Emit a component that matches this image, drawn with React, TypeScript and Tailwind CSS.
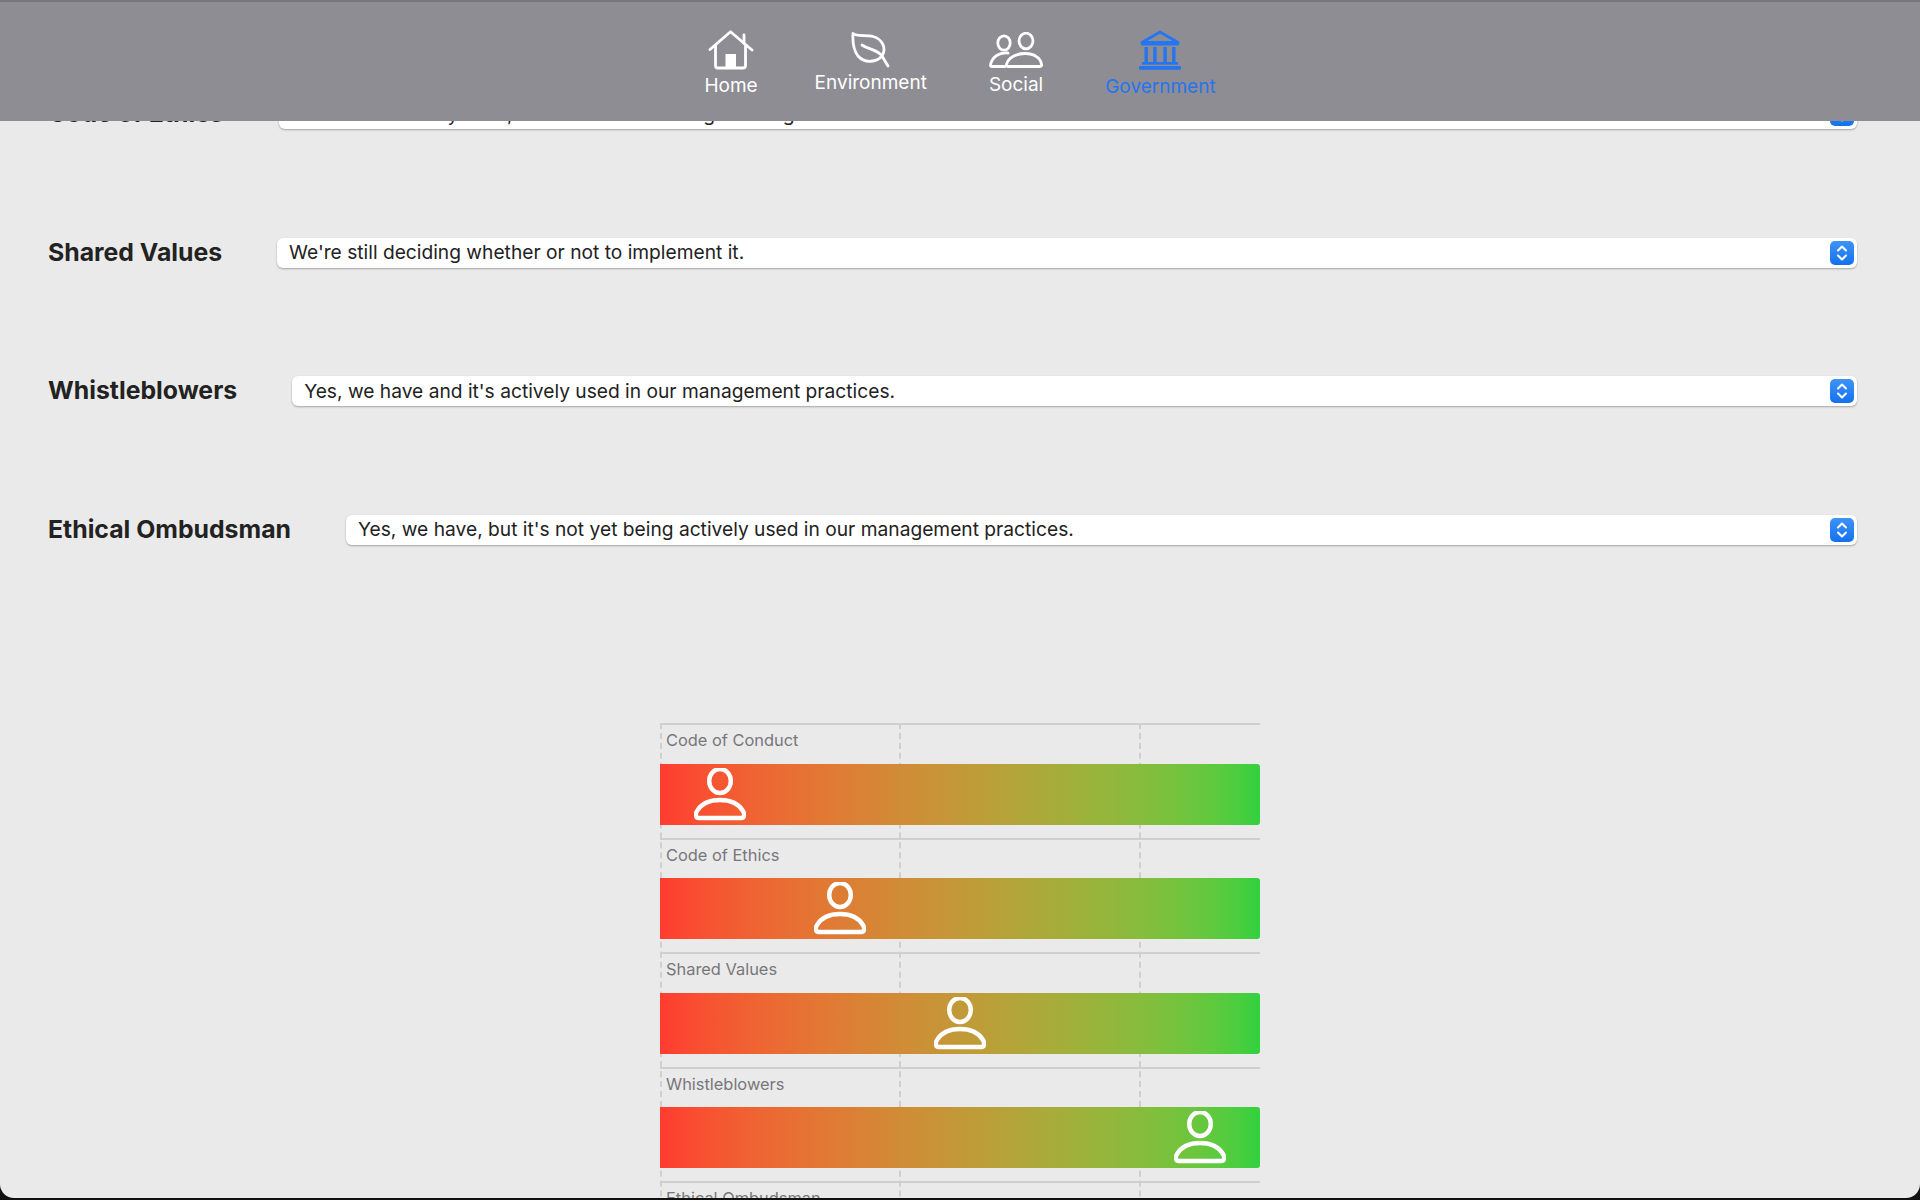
const sans = "font-['Inter','Noto_Sans',sans-serif]";

function HomeIcon() {
  return (
    <svg width="46" height="40" viewBox="0 0 46 40" fill="none" stroke="white" strokeWidth="2.8" strokeLinecap="round" strokeLinejoin="round">
      <path d="M2 19.5 22.5 1.800 44 20" />
      <path d="M36 13.500V5" />
      <path d="M7.500 16V35.500a2.500 2.500 0 0 0 2.500 2.500H35a2.500 2.500 0 0 0 2.500-2.500V16" />
      <rect x="17.5" y="24" width="10.5" height="14" fill="white" stroke="none" />
    </svg>
  );
}
function LeafIcon() {
  return (
    <svg width="40" height="36" viewBox="0 0 40 36" fill="none" stroke="white" strokeWidth="2.8" strokeLinecap="round" strokeLinejoin="round">
      <path d="M2 1.5C6 5 15 2.5 22 4.5C31 7 36 16 31 24C26 30 14 32 7 24C2.5 18 1.5 9 2 1.5Z" />
      <path d="M11 13C18 18 26 17 31 24L37 34" />
    </svg>
  );
}
function PeopleIcon() {
  return (
    <svg width="54" height="36" viewBox="0 0 54 36" fill="none" stroke="white" strokeWidth="2.8" strokeLinecap="round" strokeLinejoin="round">
      <ellipse cx="15" cy="11" rx="6.2" ry="7.2" />
      <ellipse cx="37" cy="9" rx="7" ry="7.8" />
      <path d="M19 21C10 20 3 25 1.5 33a1.5 1.5 0 0 0 1.5 1.5H16" />
      <path d="M19 34.5a1.5 1.5 0 0 1-1.5-2C19 26 27 21.5 36 21.5S52 26 52.5 32.5a1.5 1.5 0 0 1-1.5 2Z" />
    </svg>
  );
}
function BankIcon() {
  return (
    <svg width="44" height="40" viewBox="0 0 44 40" fill="#2575f0" stroke="#2575f0">
      <path d="M22 2 40 12.5H4Z" fill="none" strokeWidth="3" strokeLinejoin="round" />
      <rect x="3" y="12" width="38" height="3.6" rx="1" stroke="none" />
      <rect x="1" y="36" width="42" height="3.8" rx="1" stroke="none" />
      <rect x="4" y="32" width="36" height="2.6" stroke="none" />
      <g stroke="none">
        <rect x="6.5" y="17" width="3.4" height="15" />
        <rect x="15.2" y="17" width="3.4" height="15" />
        <rect x="25.4" y="17" width="3.4" height="15" />
        <rect x="34.1" y="17" width="3.4" height="15" />
      </g>
    </svg>
  );
}
function PersonIcon() {
  return (
    <svg width="52" height="54" viewBox="0 0 52 54" fill="none" stroke="white" strokeWidth="4.4" strokeLinejoin="round">
      <ellipse cx="26" cy="13" rx="10.8" ry="12" />
      <path d="M5 50C1.5 50 1 46.5 3 43C7.500 35.500 16 32 26 32S44.500 35.500 49 43C51 46.500 50.500 50 47 50Z" />
    </svg>
  );
}
function Stepper() {
  return (
    <div className="w-6 h-6 rounded-[5px] bg-gradient-to-b from-[#3d93f7] to-[#1470ee] flex items-center justify-center shrink-0">
      <svg width="14" height="18" viewBox="0 0 14 18" fill="none" stroke="white" strokeWidth="2" strokeLinecap="round" strokeLinejoin="round">
        <path d="M3 6.5 7 2.5 11 6.5" />
        <path d="M3 11.5 7 15.5 11 11.5" />
      </svg>
    </div>
  );
}
function FormRow({ label, value }: { label: string; value: string }) {
  return (
    <div className="h-[138.5px] flex items-center pl-12 pr-[63px] gap-[55px]">
      <span className="text-[24.8px] leading-8 pb-[2px] font-bold text-[#222222] whitespace-nowrap">{label}</span>
      <div className="flex-1 h-[30px] bg-white rounded-[6px] shadow-[0_1px_2px_rgba(0,0,0,0.3)] flex items-center justify-between pl-3 pr-[3px]">
        <span className="text-[19.2px] text-[#222222] whitespace-nowrap">{value}</span>
        <Stepper />
      </div>
    </div>
  );
}
function ChartRow({ label, left }: { label: string; left: string }) {
  return (
    <div className="h-[114.5px] border-t-2 border-[#cfcfd1] relative">
      <div className="h-[38.5px] pl-1.5 pb-[7px] flex items-center text-[16.4px] text-[#77777a]">{label}</div>
      <div className="h-[61px] relative rounded-r-[3px] bg-gradient-to-r from-[#ff3b30] to-[#30d13f]">
        <div className="absolute top-[4px] -translate-x-1/2" style={{ left }}>
          <PersonIcon />
        </div>
      </div>
    </div>
  );
}

const rows = [
  ["Code of Ethics", "We don't currently have, but we're considering creating it."],
  ["Shared Values", "We're still deciding whether or not to implement it."],
  ["Whistleblowers", "Yes, we have and it's actively used in our management practices."],
  ["Ethical Ombudsman", "Yes, we have, but it's not yet being actively used in our management practices."],
];
const chart = [
  ["Code of Conduct", "10%"],
  ["Code of Ethics", "30%"],
  ["Shared Values", "50%"],
  ["Whistleblowers", "90%"],
  ["Ethical Ombudsman", "50%"],
];

export default function App() {
  return (
    <div className="h-[1200px] bg-[#111111] overflow-hidden">
      <div className={`${sans} relative h-[1198px] overflow-hidden bg-[#eaeaea] rounded-b-[14px]`}>
        <div className="pt-[45px]">
          {rows.map(([l, v]) => (
            <FormRow key={l} label={l} value={v} />
          ))}
        </div>
        <div className="relative w-[600px] mx-auto mt-[124px]">
          <div className="absolute inset-y-0 left-0 border-l-2 border-dashed border-[#cfcfd1]" />
          <div className="absolute inset-y-0 left-[239px] border-l-2 border-dashed border-[#cfcfd1]" />
          <div className="absolute inset-y-0 left-[479px] border-l-2 border-dashed border-[#cfcfd1]" />
          {chart.map(([l, p]) => (
            <ChartRow key={l} label={l} left={p} />
          ))}
        </div>
        <header className="absolute top-0 inset-x-0 h-[121px] bg-[#8e8d93] border-t-2 border-[#77767b] flex justify-center text-white text-[19px]">
          <div className="flex flex-col items-center pt-[28px] gap-[2px]"><HomeIcon /><span>Home</span></div>
          <div className="flex flex-col items-center pt-[30px] gap-[1px] ml-[57px]"><LeafIcon /><span>Environment</span></div>
          <div className="flex flex-col items-center pt-[30px] gap-[3px] ml-[62px]"><PeopleIcon /><span>Social</span></div>
          <div className="flex flex-col items-center pt-[28px] gap-[3px] ml-[62px] text-[#2575f0]"><BankIcon /><span>Government</span></div>
        </header>
      </div>
    </div>
  );
}
